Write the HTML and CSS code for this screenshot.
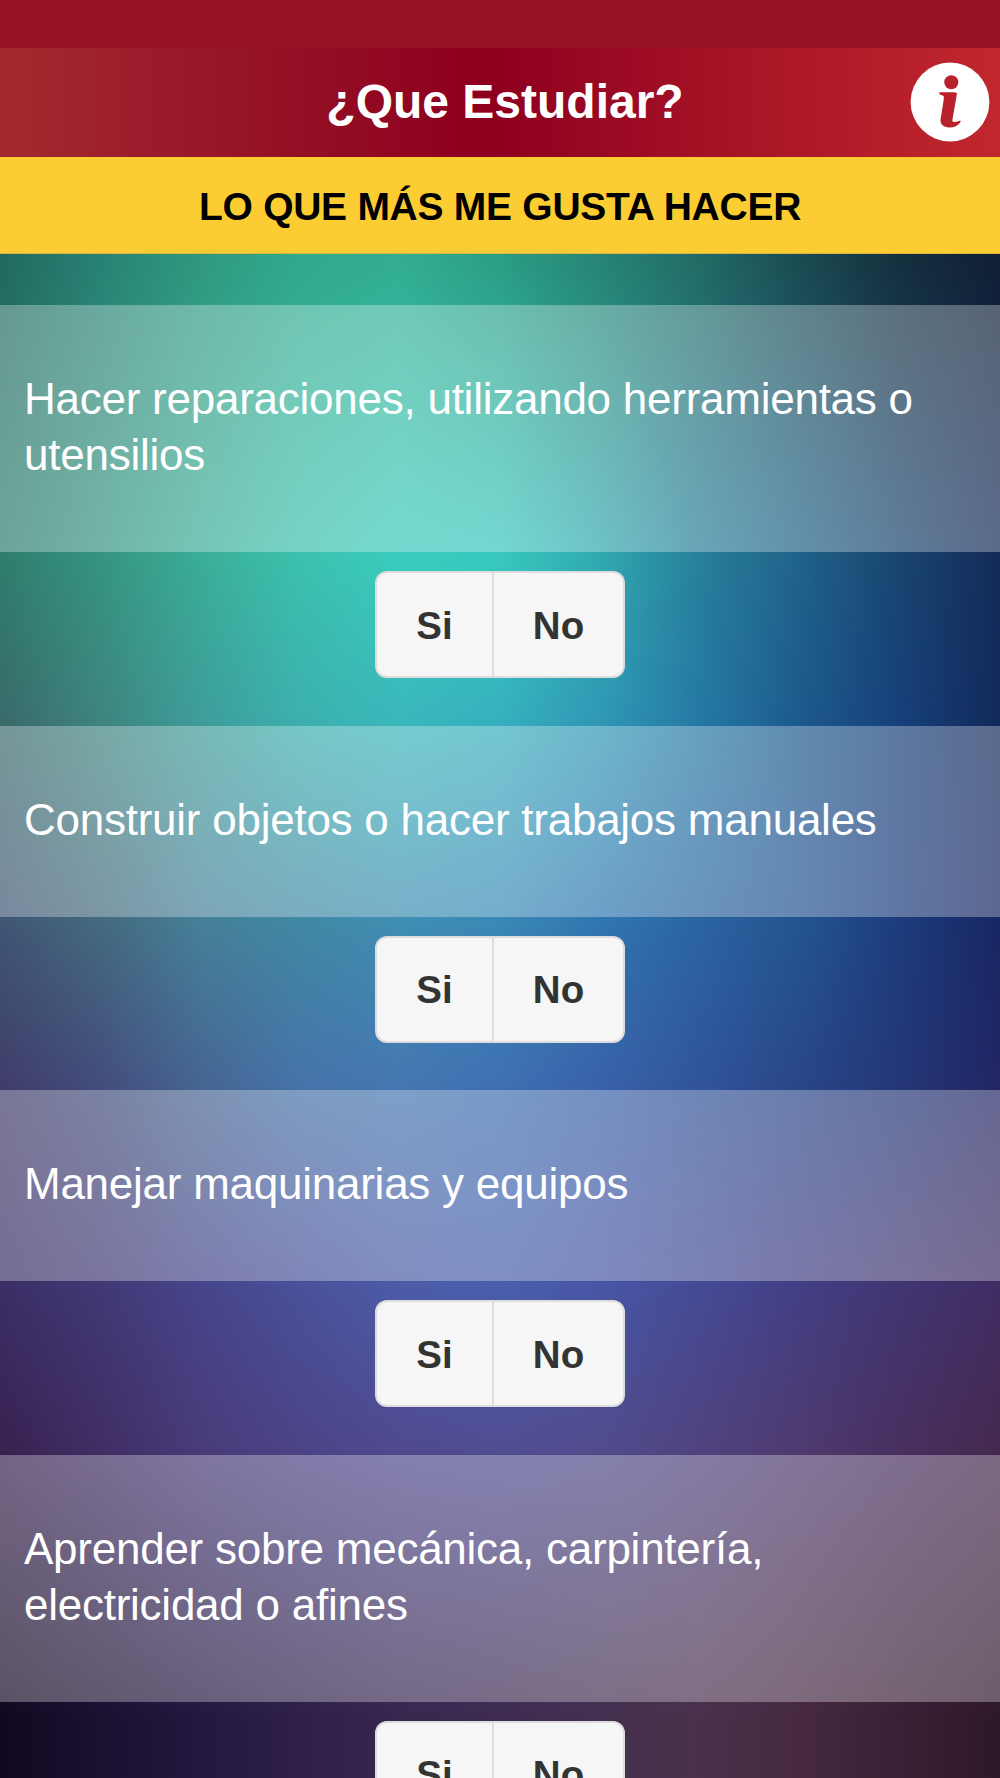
FILE: index.html
```html
<!DOCTYPE html>
<html lang="es">
<head>
    <meta charset="UTF-8">
    <meta name="viewport" content="width=device-width, initial-scale=1.0">
    <title>¿Que Estudiar?</title>
    <link rel="stylesheet" href="styles.css">
</head>
<body>
    <!-- fondo -->
    <div class="fondo">
        <div class="capa capa-1"></div>
        <div class="capa capa-2"></div>
        <div class="capa capa-3"></div>
        <div class="capa capa-4"></div>
        <div class="capa capa-5"></div>
        <div class="capa capa-6"></div>
        <div class="capa capa-7"></div>
        <div class="capa capa-8"></div>
    </div>

    <div class="status-bar"></div>

    <header class="header">
        <h1>¿Que Estudiar?</h1>
        <button type="button" class="btn-info" aria-label="Información">
            <svg viewBox="0 0 80 80">
                <circle cx="40" cy="40" r="39.4" fill="#fff"/>
                <circle cx="41.3" cy="20.3" r="7" fill="#b9222c"/>
                <path d="M29.2 31.2C29 30.8 29.4 30.3 30.2 30.3H44.5C46.3 30.3 47.1 31 46.8 32.7L42.5 57.2C42.1 59.6 42.8 60.1 45 59.9C47.2 59.7 48.2 59.2 49.6 58.7C50.6 58.4 51 59.2 50.4 60.2C48.1 63.7 44.1 65.4 39.5 65.4C33 65.4 29.8 62.1 30.7 56.5L33.8 37C34.2 34.2 33.7 33.6 31.1 33C29.7 32.7 29.3 32.1 29.2 31.2Z" fill="#b9222c"/>
            </svg>
        </button>
    </header>

    <h2 class="titulo">LO QUE MÁS ME GUSTA HACER</h2>

    <main class="preguntas">
        <div class="pregunta">
            <p>Hacer reparaciones, utilizando herramientas o utensilios</p>
        </div>
        <div class="opciones">
            <button type="button">Si</button>
            <button type="button">No</button>
        </div>

        <div class="pregunta">
            <p>Construir objetos o hacer trabajos manuales</p>
        </div>
        <div class="opciones">
            <button type="button">Si</button>
            <button type="button">No</button>
        </div>

        <div class="pregunta">
            <p>Manejar maquinarias y equipos</p>
        </div>
        <div class="opciones">
            <button type="button">Si</button>
            <button type="button">No</button>
        </div>

        <div class="pregunta">
            <p>Aprender sobre mecánica, carpintería, electricidad o afines</p>
        </div>
        <div class="opciones">
            <button type="button">Si</button>
            <button type="button">No</button>
        </div>
    </main>
</body>
</html>
```
FILE: styles.css
```css
* {
    margin: 0;
    padding: 0;
    box-sizing: border-box;
}

html {
    overflow: hidden;
}

body {
    position: relative;
    width: 1000px;
    height: 1778px;
    overflow: hidden;
    background: #120822;
    font-family: "Liberation Sans", Helvetica, Arial, sans-serif;
}

/* Fondo: cada capa aparece poco a poco sobre la anterior */
.fondo {
    position: absolute;
    inset: 0;
    z-index: -1;
}

.capa {
    position: absolute;
    inset: 0;
}

.capa-1 {
    background: linear-gradient(90deg, #21695f, #288274, #30997f, #31a98d, #33ae92, #2b9e85, #278575, #226b66, #1b4c52, #15303f, #111f35);
}

.capa-2 {
    background: linear-gradient(90deg, #2f7d6d, #369480, #3bad98, #3cc1ae, #3accbe, #38c8bf, #31a9b0, #287f9b, #20628a, #194570, #142b5a);
    mask-image: linear-gradient(transparent 260px, #000 560px);
}

.capa-3 {
    background: linear-gradient(90deg, #3a6a6a, #3e847f, #3e9d9a, #3cb0ae, #3ab7bb, #36b0be, #3098b5, #2579a4, #1d5a8c, #17407a, #122a5b);
    mask-image: linear-gradient(transparent 560px, #000 720px);
}

.capa-4 {
    background: linear-gradient(90deg, #3f5574, #44697f, #467f98, #4188a4, #3f8db2, #3b88b6, #3076b0, #2b64a0, #245492, #1d3c7c, #182763);
    mask-image: linear-gradient(transparent 720px, #000 925px);
}

.capa-5 {
    background: linear-gradient(90deg, #403d69, #434d7c, #466592, #4673a9, #4577b1, #3e70b2, #3a62a9, #315499, #294688, #243777, #232664);
    mask-image: linear-gradient(transparent 925px, #000 1085px);
}

.capa-6 {
    background: linear-gradient(90deg, #3b2e65, #413975, #47458a, #4a5099, #4c5ba6, #495eac, #4856a4, #464b95, #433f84, #423672, #402d63);
    mask-image: linear-gradient(transparent 1085px, #000 1290px);
}

.capa-7 {
    background: linear-gradient(90deg, #382250, #402e64, #493b79, #4c4486, #504a8f, #514d92, #514c8c, #50437f, #4e3a6f, #483060, #45294f);
    mask-image: linear-gradient(transparent 1290px, #000 1450px);
}

.capa-8 {
    background: linear-gradient(90deg, #110820, #1a1030, #23183e, #2e2048, #38274e, #3d2b50, #44304f, #4a304b, #46293f, #3a2034, #2e1828);
    mask-image: linear-gradient(transparent 1450px, #000 1720px);
}

.status-bar {
    height: 48px;
    background: #951224;
}

.header {
    display: grid;
    grid-template-columns: 90px 1fr 90px;
    align-items: center;
    height: 109px;
    padding-bottom: 1px;
    background: linear-gradient(90deg, #a3292e 0%, #98182a 20%, #951224 27%, #8f0020 46%, #8f0020 50%, #a81526 75%, #c1272d 100%);
}

h1 {
    grid-column: 2;
    padding: 0 0 1px 10px;
    color: #fff;
    font-size: 48px;
    line-height: 56px;
    text-align: center;
}

.btn-info {
    width: 80px;
    height: 80px;
    border: none;
    background: none;
}

.btn-info svg {
    display: block;
}

.titulo {
    height: 97px;
    background: #fbcd32;
    border-bottom: 1px solid #d9b440;
    color: #000;
    font-size: 39px;
    letter-spacing: -0.27px;
    line-height: 99px;
    text-align: center;
}

.preguntas {
    padding-top: 51px;
}

.pregunta {
    padding: 66px 24px 69px;
    background: rgba(255, 255, 255, 0.3);
    color: #fff;
    font-size: 44px;
    letter-spacing: -0.25px;
    line-height: 56px;
}

.opciones {
    display: flex;
    justify-content: center;
    height: 173.5px;
    padding-top: 19px;
}

.opciones button {
    width: 119px;
    height: 107px;
    padding-top: 2px;
    background: #f6f6f6;
    border: 2px solid #ddd;
    border-radius: 12px 0 0 12px;
    color: #333;
    font-family: inherit;
    font-size: 38.5px;
    font-weight: bold;
}

.opciones button + button {
    width: 133px;
    margin-left: -2px;
    border-radius: 0 12px 12px 0;
}
```
